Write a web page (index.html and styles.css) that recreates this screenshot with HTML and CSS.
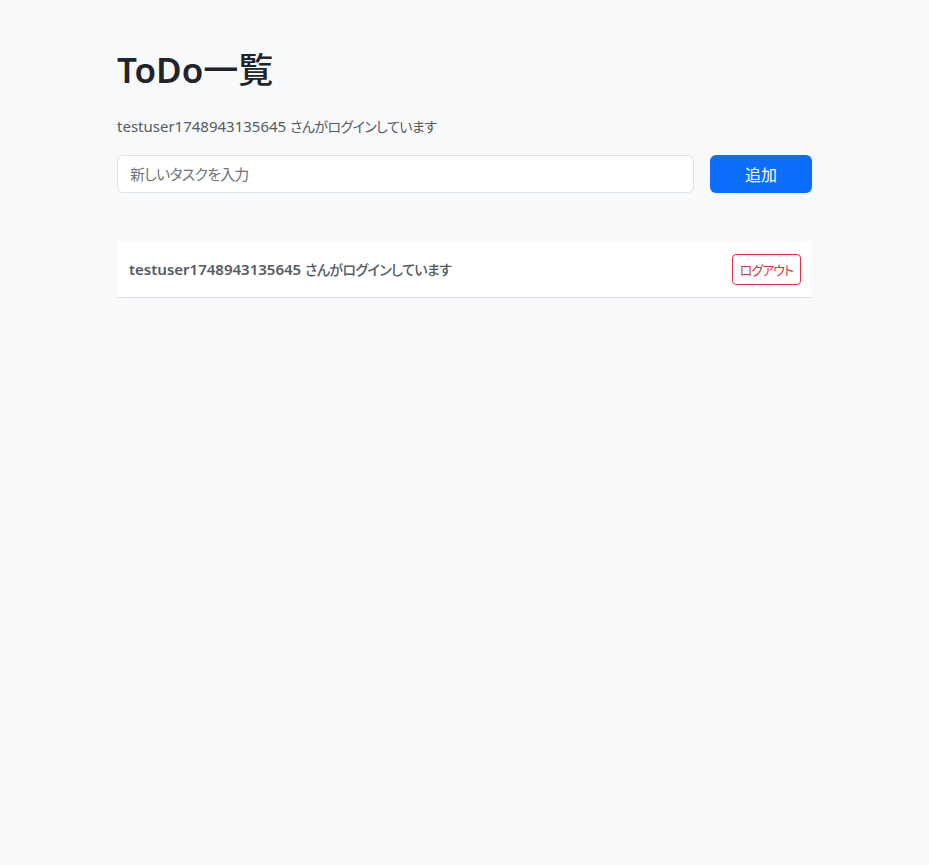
FILE: index.html
```html
<!DOCTYPE html>
<html lang="ja">
<head>
<meta charset="utf-8">
<title>ToDo一覧</title>
<link rel="stylesheet" href="styles.css">
</head>
<body>
<main class="container">
  <h1 class="title">ToDo<span class="ja-title">一覧</span></h1>
  <p class="login-info">testuser1748943135645 <span class="ja">さんがログインしています</span></p>
  <form class="add-form">
    <input class="task-input" type="text" placeholder="新しいタスクを入力">
    <button class="add-btn" type="button">追加</button>
  </form>
  <div class="user-bar">
    <span class="user-text">testuser1748943135645 <span class="ja">さんがログインしています</span></span>
    <button class="logout-btn" type="button">ログアウト</button>
  </div>
</main>
</body>
</html>
```
FILE: styles.css
```css
html, body {
  margin: 0;
  padding: 0;
}
body {
  background: #f8f9fa;
  font-family: "Noto Sans", "Noto Sans CJK JP", sans-serif;
  font-feature-settings: "palt";
  font-size: 15px;
  color: #212529;
  min-height: 865px;
}
.container {
  width: 695px;
  margin: 0 auto;
  padding-top: 49px;
}
.title {
  margin: 0 0 23px 0;
  font-size: 35px;
  font-weight: 600;
  line-height: 42px;
  color: #212529;
}
.ja-title {
  font-weight: 500;
}
.ja {
  font-size: 14px;
  letter-spacing: -0.6px;
}
.login-info {
  margin: 0 0 16px 0;
  line-height: 24px;
  color: #555b61;
}
.add-form {
  display: flex;
  gap: 16px;
  margin: 0 0 48px 0;
}
.task-input {
  flex: 1;
  height: 38px;
  box-sizing: border-box;
  border: 1px solid #dee2e6;
  border-radius: 6px;
  background: #fff;
  padding: 0 12px;
  font: inherit;
  letter-spacing: -0.8px;
  color: #212529;
}
.task-input::placeholder {
  color: #6c757d;
}
.add-btn {
  width: 102px;
  height: 38px;
  border: none;
  border-radius: 6px;
  background: #0d6efd;
  color: #fff;
  font: inherit;
  font-size: 16px;
}
.user-bar {
  display: flex;
  align-items: center;
  justify-content: space-between;
  background: #fff;
  border-bottom: 1px solid #dee2e6;
  height: 57px;
  box-sizing: border-box;
  padding: 0 11px 0 12px;
}
.user-text {
  font-weight: 600;
  color: #555b61;
}
.user-text .ja {
  font-weight: 500;
}
.logout-btn {
  height: 31px;
  padding: 0 7px;
  border: 1px solid #dc3545;
  border-radius: 4px;
  background: #fff;
  color: #dc3545;
  font: inherit;
  font-size: 13px;
  letter-spacing: -1px;
}
```
